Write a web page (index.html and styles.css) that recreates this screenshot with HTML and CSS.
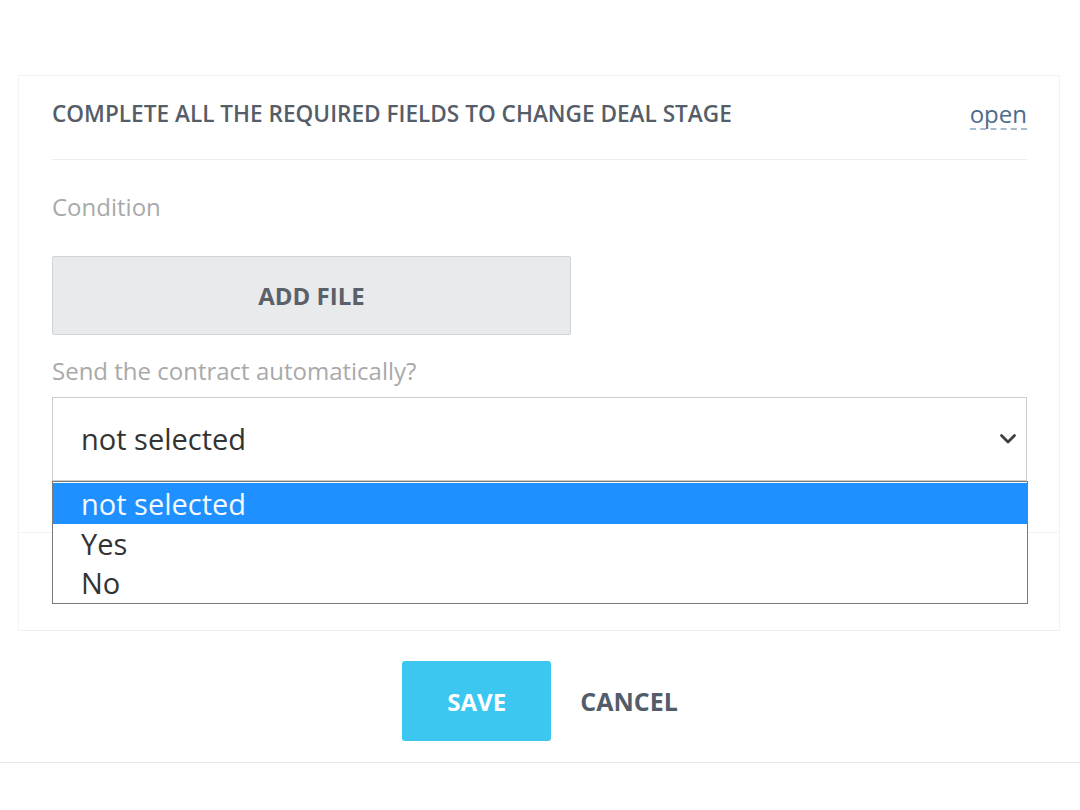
FILE: index.html
```html
<!DOCTYPE html>
<html lang="en">
<head>
<meta charset="utf-8">
<title>Deal stage</title>
<link rel="stylesheet" href="styles.css">
</head>
<body>
<div class="page">
  <div class="card">
    <div class="content">
      <div class="header">
        <span class="title">COMPLETE ALL THE REQUIRED FIELDS TO CHANGE DEAL STAGE</span>
        <span class="toggle">open</span>
      </div>
      <div class="field-label condition">Condition</div>
      <button class="add-file">ADD FILE</button>
      <div class="field-label send">Send the contract automatically?</div>
      <div class="select-wrap">
        <div class="select">
          <span class="select-value">not selected</span>
          <svg class="chevron" width="18" height="12" viewBox="0 0 18 12"><path d="M2.5 2.5 L9 9 L15.5 2.5" fill="none" stroke="#3d3d3d" stroke-width="2.8" stroke-linecap="round" stroke-linejoin="round"/></svg>
        </div>
        <ul class="options">
          <li class="option active">not selected</li>
          <li class="option">Yes</li>
          <li class="option">No</li>
        </ul>
      </div>
    </div>
    <div class="spacer"></div>
  </div>
  <div class="footer">
    <button class="save">SAVE</button>
    <button class="cancel">CANCEL</button>
  </div>
</div>
</body>
</html>
```

FILE: styles.css
```css
html, body {
  margin: 0;
  padding: 0;
  background: #ffffff;
}
body {
  font-family: "Open Sans", "Liberation Sans", sans-serif;
  color: #535c69;
}
.page {
  padding-top: 75px;
}
.card {
  margin: 0 20px 0 18px;
  border: 1px solid #f3f3f3;
  border-bottom-color: #eeeeee;
  box-sizing: border-box;
}
.content {
  padding: 0 32px 0 33px;
  border-bottom: 1px solid #f1f1f1;
  height: 457px;
  box-sizing: border-box;
}
.header {
  display: flex;
  justify-content: space-between;
  align-items: flex-start;
  box-sizing: border-box;
  height: 84px;
  padding-top: 23px;
  border-bottom: 1px solid #ececec;
}
.title {
  font-size: 22.6px;
  font-weight: 600;
  line-height: 30px;
  color: #555d68;
}
.toggle {
  font-size: 24px;
  line-height: 29px;
  color: #4c6b8c;
  border-bottom: 2px dashed #a9bccf;
}
.field-label {
  font-size: 24px;
  line-height: 30px;
  color: #a9a9a9;
}
.condition {
  margin-top: 32px;
}
.add-file {
  display: block;
  margin-top: 34px;
  width: 519px;
  height: 79px;
  background: #e9eaec;
  border: 1px solid #cfd3d7;
  border-radius: 2px;
  font-family: "Open Sans", "Liberation Sans", sans-serif;
  font-size: 24px;
  font-weight: 700;
  color: #5b6169;
  padding: 0;
}
.send {
  margin-top: 21px;
}
.select-wrap {
  position: relative;
  margin-top: 11px;
}
.select {
  height: 84px;
  box-sizing: border-box;
  border: 1px solid #cccccc;
  display: flex;
  align-items: center;
  justify-content: space-between;
  padding: 0 9px 0 28px;
  background: #fff;
}
.select-value {
  font-size: 29px;
  color: #333333;
  line-height: 40px;
}
.chevron {
  display: block;
}
.options {
  position: absolute;
  left: 0;
  right: -1px;
  top: 84px;
  margin: 0;
  padding: 1px 0 3px;
  list-style: none;
  background: #ffffff;
  border: 1px solid #7a7a7a;
  box-sizing: border-box;
  height: 123px;
}
.option {
  font-size: 29px;
  line-height: 39px;
  height: 39px;
  padding-left: 28px;
  color: #333333;
}
.option.active {
  background: #1e90ff;
  color: #f4f8ff;
  height: 41px;
  line-height: 41px;
}
.spacer {
  height: 97px;
}
.footer {
  display: flex;
  justify-content: center;
  align-items: center;
  gap: 29px;
  padding: 30px 0 21px;
  border-bottom: 1px solid #e7e7e7;
}
.save {
  width: 149px;
  height: 80px;
  background: #3cc7f1;
  border: none;
  border-radius: 3px;
  color: #ffffff;
  font-family: "Open Sans", "Liberation Sans", sans-serif;
  font-size: 24px;
  font-weight: 700;
  padding: 0;
}
.cancel {
  background: none;
  border: none;
  padding: 0;
  font-family: "Open Sans", "Liberation Sans", sans-serif;
  font-size: 25px;
  font-weight: 700;
  color: #535c69;
}
```
